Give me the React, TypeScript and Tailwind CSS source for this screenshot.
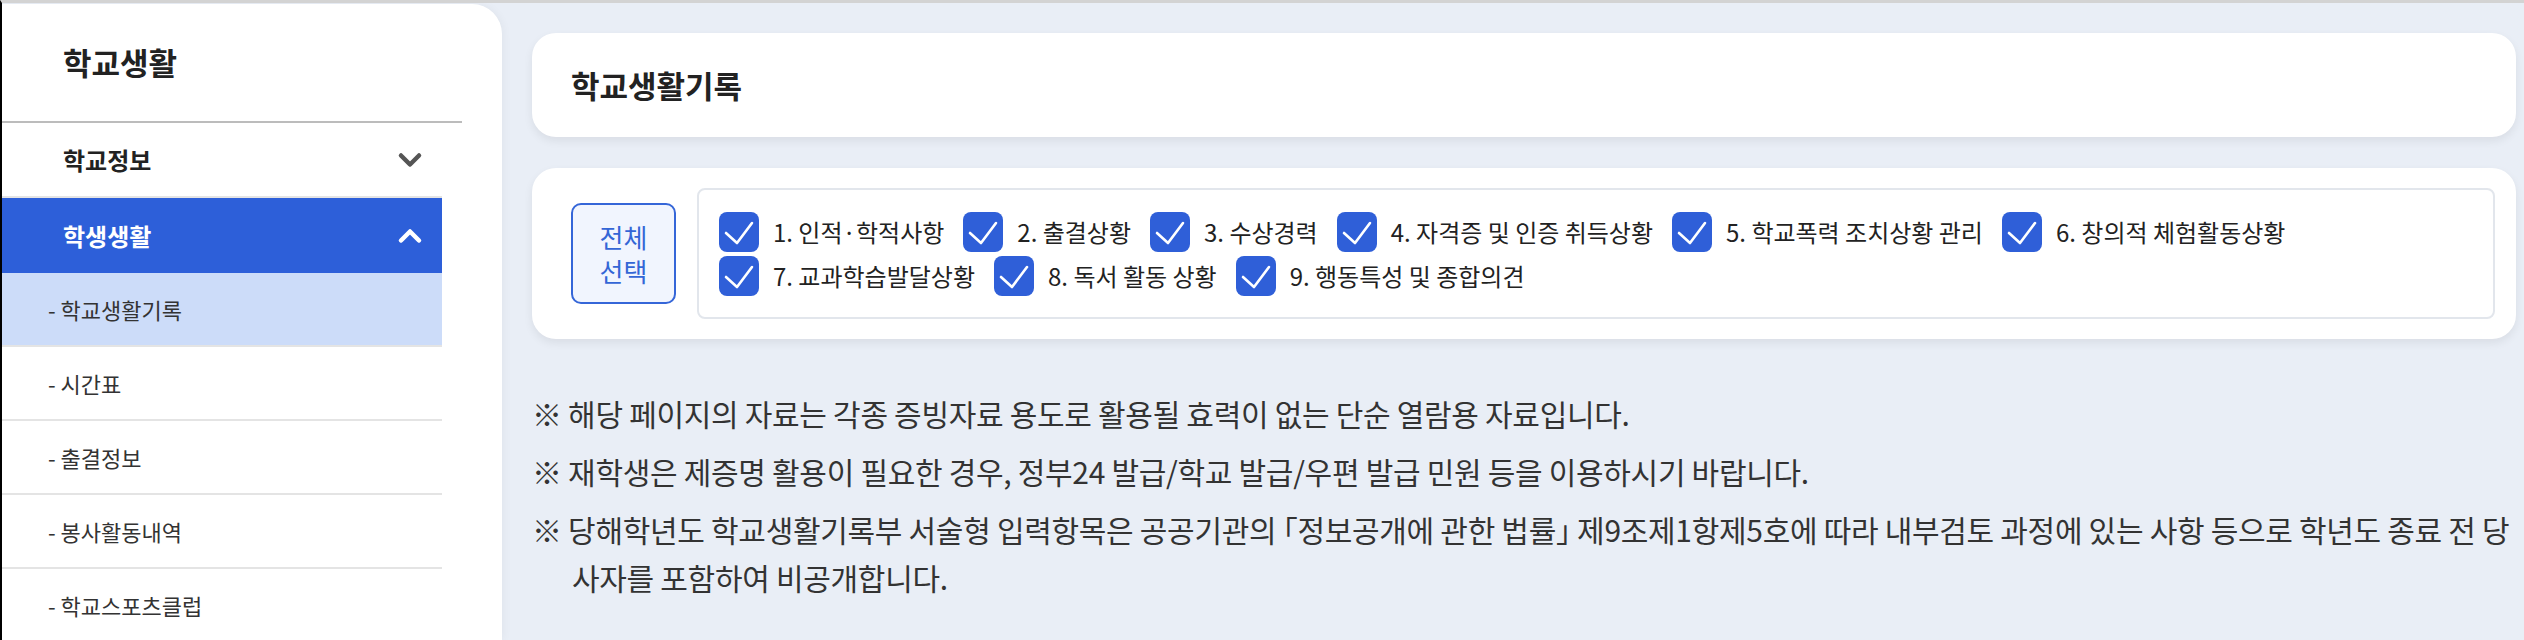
import { ChevronDown, ChevronUp } from 'lucide-react';

const items = [
  '1. 인적·학적사항',
  '2. 출결상황',
  '3. 수상경력',
  '4. 자격증 및 인증 취득상황',
  '5. 학교폭력 조치상황 관리',
  '6. 창의적 체험활동상황',
  '7. 교과학습발달상황',
  '8. 독서 활동 상황',
  '9. 행동특성 및 종합의견',
];

const subMenu = ['학교생활기록', '시간표', '출결정보', '봉사활동내역', '학교스포츠클럽'];

const notices = [
  '※ 해당 페이지의 자료는 각종 증빙자료 용도로 활용될 효력이 없는 단순 열람용 자료입니다.',
  '※ 재학생은 제증명 활용이 필요한 경우, 정부24 발급/학교 발급/우편 발급 민원 등을 이용하시기 바랍니다.',
  '※ 당해학년도 학교생활기록부 서술형 입력항목은 공공기관의 「정보공개에 관한 법률」 제9조제1항제5호에 따라 내부검토 과정에 있는 사항 등으로 학년도 종료 전 당사자를 포함하여 비공개합니다.',
];

const CheckBox = () => (
  <span className="flex h-[40px] w-[40px] shrink-0 items-center justify-center rounded-[8px] bg-[#2f5fd8]">
    <svg width="40" height="40" viewBox="0 0 40 40" fill="none">
      <path d="M7 21 L18 31 L33 11" stroke="white" strokeWidth="2.6" strokeLinecap="round" strokeLinejoin="round" />
    </svg>
  </span>
);

const Sidebar = () => (
  <aside className="mt-px w-[500px] shrink-0 rounded-tr-[30px] bg-white shadow-[2px_0_8px_rgba(0,0,0,0.04)]">
    <div className="flex h-[119px] w-[460px] items-center border-b-2 border-[#bcbcbc] pl-[61px]">
      <h2 className="text-[31px] font-semibold text-[#222]">학교생활</h2>
    </div>
    <ul className="w-[440px]">
      <li className="flex h-[75px] items-center justify-between border-b-2 border-[#e4e4e4] pl-[61px] pr-[14px]">
        <span className="text-[24px] font-bold text-[#222]">학교정보</span>
        <ChevronDown size={36} strokeWidth={3} className="text-[#555]" />
      </li>
      <li className="flex h-[75px] items-center justify-between bg-[#2d5fd9] pl-[61px] pr-[14px]">
        <span className="text-[24px] font-bold text-white">학생생활</span>
        <ChevronUp size={36} strokeWidth={3} className="text-white" />
      </li>
      {subMenu.map((m, i) => (
        <li
          key={m}
          className={`flex h-[74px] items-center border-b-2 border-[#e4e4e4] pl-[46px] text-[22px] text-[#333] ${
            i === 0 ? 'bg-[#ccdcf9]' : ''
          }`}
        >
          - {m}
        </li>
      ))}
    </ul>
  </aside>
);

export default function App() {
  return (
    <div className="flex h-[640px] w-[2524px] overflow-hidden border-l-2 border-t-[3px] border-l-black border-t-[#d3d3d3] bg-[#e9eef6] font-['Noto_Sans_CJK_KR','Noto_Sans',sans-serif]">
      <Sidebar />
      <main className="flex-1 pl-[30px] pr-[8px] pt-[30px]">
        <section className="flex h-[104px] items-center rounded-[24px] bg-white pl-[39px] shadow-[0_4px_10px_rgba(0,0,0,0.07)]">
          <h1 className="text-[31px] font-bold text-[#222]">학교생활기록</h1>
        </section>

        <section className="mt-[31px] flex items-center gap-[21px] rounded-[24px] bg-white py-[20px] pl-[39px] pr-[21px] shadow-[0_4px_10px_rgba(0,0,0,0.07)]">
          <button className="flex h-[101px] w-[105px] shrink-0 flex-col items-center justify-center rounded-[10px] border-2 border-[#3566d8] bg-[#f1f5fe] text-[26px] leading-[34px] text-[#3466d6]">
            <span>전체</span>
            <span>선택</span>
          </button>
          <div className="flex h-[131px] flex-1 flex-wrap content-start gap-y-[4px] rounded-[8px] border-2 border-[#e2e6ec] pl-[20px] pt-[22px]">
            {items.map((t) => (
              <label key={t} className="mr-[19px] flex items-center gap-[14px]">
                <CheckBox />
                <span className="text-[24px] text-[#222]">{t}</span>
              </label>
            ))}
          </div>
        </section>

        <div className="-mr-[6px] mt-[50px] text-[30px] leading-[48px] tracking-[-0.3px] text-[#333] [font-feature-settings:'halt']">
          {notices.map((n) => (
            <p key={n} className="mb-[10px] pl-[40px] -indent-[40px]">
              {n}
            </p>
          ))}
        </div>
      </main>
    </div>
  );
}
